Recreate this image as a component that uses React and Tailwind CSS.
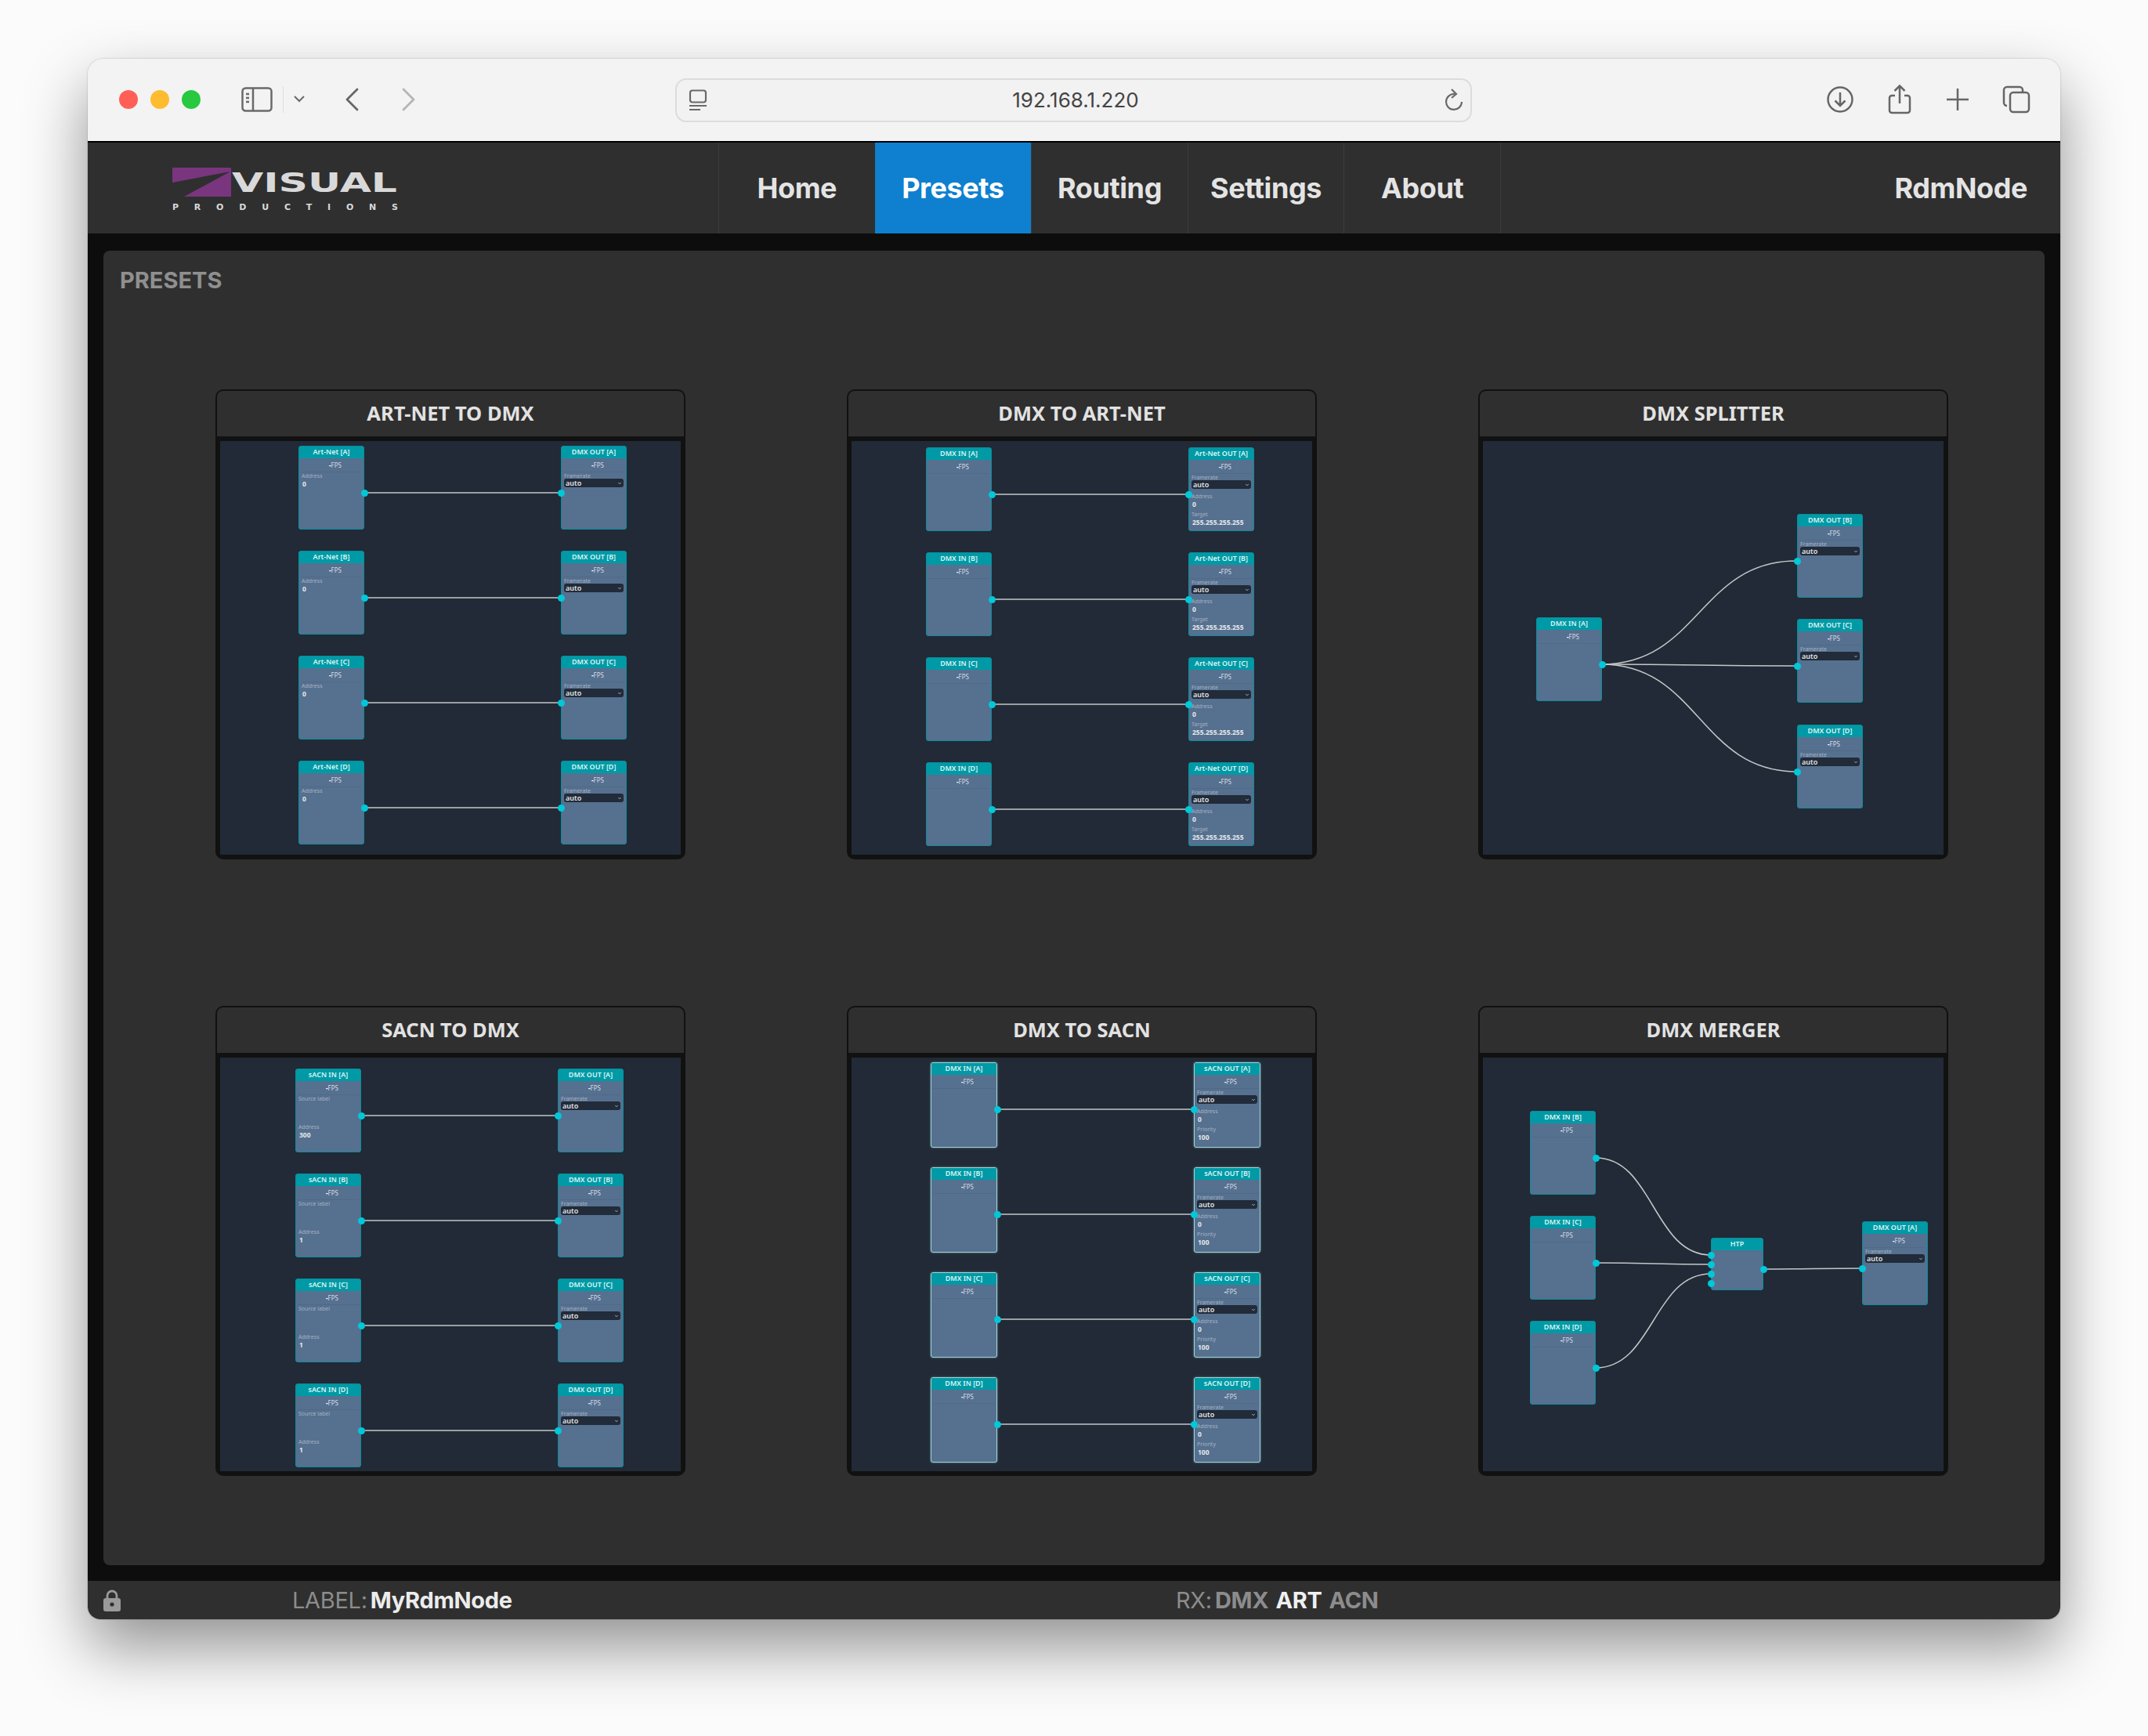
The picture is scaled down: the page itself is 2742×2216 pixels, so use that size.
import React from 'react';
import { ChevronDown } from 'lucide-react';

const UI = '[font-family:Inter,sans-serif]';

const OUT_FIELDS = [{ label: 'Framerate', select: true }];
const ARTNET_OUT = [
  { label: 'Framerate', select: true },
  { label: 'Address', value: '0' },
  { label: 'Target', value: '255.255.255.255' },
];
const SACN_OUT = [
  { label: 'Framerate', select: true },
  { label: 'Address', value: '0' },
  { label: 'Priority', value: '100' },
];
const sacnIn = (addr) => [{ label: 'Source label', tall: true }, { label: 'Address', value: addr }];

const LETTERS = ['A', 'B', 'C', 'D'];

// four parallel in -> out rows, every preset with this shape only differs in names and offsets
function rowsPreset(leftX, rightX, topY, leftTitle, rightTitle, leftFields, rightFields, glow) {
  const nodes = [];
  const links = [];
  const w = glow ? 85 : 84;
  const h = glow ? 109 : 107;
  LETTERS.forEach((l, i) => {
    const y = topY + i * 134;
    nodes.push({ x: leftX, y, w, h, title: `${leftTitle} [${l}]`, fields: leftFields(i), out: [60], glow });
    nodes.push({ x: rightX, y, w, h, title: `${rightTitle} [${l}]`, fields: rightFields, in: [60], glow });
    links.push([leftX + w, y + 60, rightX, y + 60]);
  });
  return { nodes, links };
}

const PRESETS = [
  { name: 'ART-NET TO DMX', ...rowsPreset(100, 435, 6, 'Art-Net', 'DMX OUT', () => [{ label: 'Address', value: '0' }], OUT_FIELDS) },
  { name: 'DMX TO ART-NET', ...rowsPreset(95, 430, 8, 'DMX IN', 'Art-Net OUT', () => [], ARTNET_OUT) },
  {
    name: 'DMX SPLITTER',
    nodes: [
      { x: 68, y: 225, title: 'DMX IN [A]', fields: [], out: [60] },
      { x: 401, y: 93, title: 'DMX OUT [B]', fields: OUT_FIELDS, in: [60] },
      { x: 401, y: 227, title: 'DMX OUT [C]', fields: OUT_FIELDS, in: [60] },
      { x: 401, y: 362, title: 'DMX OUT [D]', fields: OUT_FIELDS, in: [60] },
    ],
    links: [
      [151, 285, 401, 153],
      [151, 285, 401, 287],
      [151, 285, 401, 422],
    ],
  },
  { name: 'SACN TO DMX', ...rowsPreset(96, 431, 14, 'sACN IN', 'DMX OUT', (i) => sacnIn(i === 0 ? '300' : '1'), OUT_FIELDS) },
  { name: 'DMX TO SACN', ...rowsPreset(101, 437, 6, 'DMX IN', 'sACN OUT', () => [], SACN_OUT, true) },
  {
    name: 'DMX MERGER',
    nodes: [
      { x: 60, y: 68, title: 'DMX IN [B]', fields: [], out: [60] },
      { x: 60, y: 202, title: 'DMX IN [C]', fields: [], out: [60] },
      { x: 60, y: 336, title: 'DMX IN [D]', fields: [], out: [60] },
      { x: 291, y: 230, title: 'HTP', fields: [], noFps: true, w: 67, h: 67, in: [22, 34, 46, 58], out: [40] },
      { x: 484, y: 209, title: 'DMX OUT [A]', fields: OUT_FIELDS, in: [60] },
    ],
    links: [
      [144, 128, 291, 252],
      [144, 262, 291, 264],
      [144, 396, 291, 276],
      [358, 270, 484, 269],
    ],
  },
];

function Port({ y, side }) {
  return (
    <span
      className={`absolute w-[9px] h-[9px] rounded-full bg-[#00c8d8] ${side === 'left' ? 'left-[-5.5px]' : 'right-[-5.5px]'}`}
      style={{ top: y - 5.5 }}
    />
  );
}

function Field({ label, value, select, tall }) {
  return (
    <div className={`px-[3px] shrink-0 ${tall ? 'h-[36px]' : 'h-[23.5px]'}`}>
      <div className="text-[7px] leading-[9px] text-[#a3b2c4]">{label}</div>
      {select ? (
        <div className="h-[11px] mt-[-1px] rounded-[3px] bg-[#212b39] flex items-center justify-between pl-[2px] pr-[2px]">
          <span className="text-[9px] leading-[11px] font-semibold text-[#e8e8e8]">auto</span>
          <ChevronDown className="w-[6px] h-[6px] text-[#cfd4da]" strokeWidth={3} />
        </div>
      ) : (
        value && <div className="pl-[1px] text-[8.5px] leading-[11px] font-bold text-[#e4e8ec]">{value}</div>
      )}
    </div>
  );
}

function GraphNode({ x, y, title, fields, noFps, w = 84, h = 107, glow, in: ins = [], out: outs = [] }) {
  return (
    <div
      className={`absolute rounded-[3px] border bg-[#56708f] flex flex-col ${glow ? 'border-[#9fd6da] shadow-[0_0_3px_rgba(170,225,230,0.5)]' : 'border-[#0b8d9c]'}`}
      style={{ left: x, top: y, width: w, height: h }}
    >
      <div className="h-[15px] shrink-0 rounded-t-[2px] bg-[#009aa6] text-center text-[9px] leading-[14px] font-semibold text-[#dff5f5]">
        {title}
      </div>
      {!noFps && (
        <div className="h-[18px] shrink-0 mx-[2px] border-b border-[#4f6987] pl-[36px] text-[8px] leading-[18px] text-[#d3dce6]">
          <span className="font-extrabold text-white">-</span>FPS
        </div>
      )}
      {fields.map((f) => (
        <Field key={f.label} {...f} />
      ))}
      {ins.map((p) => (
        <Port key={`i${p}`} y={p} side="left" />
      ))}
      {outs.map((p) => (
        <Port key={`o${p}`} y={p} side="right" />
      ))}
    </div>
  );
}

function PresetCard({ preset }) {
  return (
    <div className="w-[600px] h-[600px] rounded-[10px] bg-[#111111] flex flex-col">
      <div className="h-[58px] mx-[2px] mt-[2px] rounded-t-[8px] bg-[#2f2f2f] text-center text-[25.5px] leading-[56px] font-bold text-[#e2e2e2] [font-family:'Noto_Sans',sans-serif]">
        {preset.name}
      </div>
      <div className="relative flex-1 mx-[6px] mt-[6px] mb-[6px] bg-[#212a36] [font-family:'Noto_Sans',sans-serif]">
        <svg className="absolute inset-0 w-full h-full" fill="none" stroke="#c4c7c9" strokeWidth="1.5">
          {preset.links.map(([x1, y1, x2, y2], i) => {
            const mx = (x1 + x2) / 2;
            return <path key={i} d={`M${x1} ${y1} C${mx} ${y1} ${mx} ${y2} ${x2} ${y2}`} />;
          })}
        </svg>
        {preset.nodes.map((n) => (
          <GraphNode key={n.title} {...n} />
        ))}
      </div>
    </div>
  );
}

function Logo() {
  return (
    <svg width="292" height="58" viewBox="0 0 292 58" className="ml-[108px]">
      <polygon points="0,0 75,0 75,37 0,37" fill="#7a357f" />
      <polygon points="0,19 74,5 15,37 0,37" fill="#2f2f2f" />
      <text x="76" y="31" textLength="211" lengthAdjust="spacingAndGlyphs" fill="#d9d9d9" fontFamily="'DejaVu Sans', sans-serif" fontWeight="700" fontSize="34">
        VISUAL
      </text>
      <text x="0" y="54" textLength="288" lengthAdjust="spacing" fill="#d9d9d9" fontFamily="'DejaVu Sans', sans-serif" fontWeight="700" fontSize="11">
        PRODUCTIONS
      </text>
    </svg>
  );
}

function Toolbar() {
  return (
    <div className="h-[107px] shrink-0 bg-[#f3f3f3] border-b-2 border-black flex items-center relative pb-[2px]">
      <div className="flex items-center gap-[16px] ml-[40px]">
        <span className="w-[24px] h-[24px] rounded-full bg-[#ff5f57]" />
        <span className="w-[24px] h-[24px] rounded-full bg-[#febc2e]" />
        <span className="w-[24px] h-[24px] rounded-full bg-[#28c840]" />
      </div>
      <svg width="40" height="32" viewBox="0 0 40 32" fill="none" stroke="#6a6a6a" strokeWidth="2.5" className="ml-[52px]">
        <rect x="1.5" y="1.5" width="37" height="29" rx="4" />
        <path d="M15 2v28M6 9h4M6 14h4M6 19h4" />
      </svg>
      <span className="w-px h-[34px] bg-[#dedede] ml-[13px]" />
      <svg width="14" height="9" viewBox="0 0 14 9" fill="none" stroke="#6a6a6a" strokeWidth="2" className="ml-[13px]">
        <path d="M1 1l6 6 6-6" />
      </svg>
      <svg width="18" height="30" viewBox="0 0 18 30" fill="none" stroke="#666" strokeWidth="2.8" strokeLinecap="round" strokeLinejoin="round" className="ml-[51px]">
        <path d="M16 2L3 15l13 13" />
      </svg>
      <svg width="18" height="30" viewBox="0 0 18 30" fill="none" stroke="#b4b4b4" strokeWidth="2.8" strokeLinecap="round" strokeLinejoin="round" className="ml-[55px]">
        <path d="M2 2l13 13L2 28" />
      </svg>
      {/* address bar */}
      <div className="w-[1017px] h-[56px] ml-[331px] mt-[2px] rounded-[14px] border-2 border-[#dcdcdc] bg-[#f2f2f2] flex items-center justify-between pl-[15px] pr-[10px]">
        <svg width="24" height="28" viewBox="0 0 24 28" fill="none" stroke="#6a6a6a" strokeWidth="2.2">
          <rect x="2" y="1.5" width="20" height="15" rx="3" />
          <path d="M1 21h22M1 26h14" />
        </svg>
        <span className={`${UI} text-[26px] text-[#444444]`}>192.168.1.220</span>
        <svg width="24" height="30" viewBox="0 0 24 30" fill="none" stroke="#6a6a6a" strokeWidth="2.2">
          <path d="M14 7a10 10 0 1 0 9 10" />
          <path d="M10 1l6 6-6 5" />
        </svg>
      </div>
      <svg width="34" height="36" viewBox="0 0 34 36" fill="none" stroke="#666" strokeWidth="2.5" className="ml-[453px]">
        <circle cx="17" cy="18" r="15.5" />
        <path d="M17 9v17M10.5 19.5L17 26l6.5-6.5" />
      </svg>
      <svg width="30" height="38" viewBox="0 0 30 38" fill="none" stroke="#666" strokeWidth="2.5" className="ml-[44px]">
        <path d="M9 14H5a3 3 0 0 0-3 3v16a3 3 0 0 0 3 3h20a3 3 0 0 0 3-3V17a3 3 0 0 0-3-3h-4" />
        <path d="M15 24V2M8.5 8L15 1.5 21.5 8" />
      </svg>
      <svg width="28" height="28" viewBox="0 0 28 28" fill="none" stroke="#666" strokeWidth="2.5" className="ml-[45px]">
        <path d="M14 0v28M0 14h28" />
      </svg>
      <svg width="36" height="36" viewBox="0 0 36 36" fill="none" stroke="#666" strokeWidth="2.5" className="ml-[43px]">
        <path d="M6 26a4 4 0 0 1-4-4V6a4 4 0 0 1 4-4h16a4 4 0 0 1 4 4v2" />
        <rect x="10" y="9" width="24" height="25" rx="4" />
      </svg>
    </div>
  );
}

const NAV = ['Home', 'Presets', 'Routing', 'Settings', 'About'];

function AppHeader() {
  return (
    <div className="h-[116px] shrink-0 bg-[#2f2f2f] flex items-stretch">
      <div className="w-[805px] flex items-center pt-[6px]">
        <Logo />
      </div>
      <nav className="flex items-stretch border-r border-[#3c3c3c]">
        {NAV.map((item) => (
          <div
            key={item}
            className={`w-[199.6px] flex items-center justify-center text-[36px] font-bold tracking-[-0.4px] ${UI} ${
              item === 'Presets' ? 'bg-[#0f80cf] text-white' : 'border-l border-[#3c3c3c] text-[#e4e4e4]'
            }`}
          >
            {item}
          </div>
        ))}
      </nav>
      <div className={`ml-auto pr-[42px] flex items-center text-[36px] font-bold tracking-[-0.4px] text-[#e4e4e4] ${UI}`}>RdmNode</div>
    </div>
  );
}

function StatusBar() {
  return (
    <div className={`h-[49px] shrink-0 bg-[#2f2f2f] flex items-center pl-[20px] text-[29px] tracking-[-0.3px] ${UI}`}>
      <svg width="22" height="28" viewBox="0 0 22 28">
        <path d="M5 12V8a6 6 0 0 1 12 0v4" fill="none" stroke="#9a9a9a" strokeWidth="2.8" />
        <rect x="0" y="11" width="22" height="17" rx="3" fill="#9a9a9a" />
        <circle cx="11" cy="19" r="2.6" fill="#2f2f2f" />
      </svg>
      <div className="w-[1128px] ml-[219px] flex gap-[4px] text-[#8c8c8c]">
        <span>LABEL:</span>
        <span className="font-bold text-[#ececec]">MyRdmNode</span>
      </div>
      <div className="flex gap-[9px] text-[#8c8c8c]">
        <span className="mr-[-5px]">RX:</span>
        <span className="font-bold">DMX</span>
        <span className="font-bold text-[#f0f0f0]">ART</span>
        <span className="font-bold">ACN</span>
      </div>
    </div>
  );
}

export default function App() {
  return (
    <div className="w-[2742px] h-[2216px] overflow-hidden bg-[#fbfbfb] pt-[75px] pl-[112px]">
      <div className="w-[2518px] h-[1992px] rounded-t-[20px] rounded-b-[16px] overflow-hidden flex flex-col shadow-[0_36px_80px_rgba(0,0,0,0.42),0_0_2px_rgba(0,0,0,0.3)]">
        <Toolbar />
        <AppHeader />
        <div className="flex-1 min-h-0 bg-[#0d0d0d] p-[20px] pt-[22px]">
          <div className="h-full rounded-[8px] bg-[#2f2f2f] pt-[22px] pl-[21px]">
            <h1 className={`text-[29px] leading-[32px] font-bold text-[#8f8f8f] ${UI}`}>PRESETS</h1>
            <div className="ml-[122px] mt-[123px] grid grid-cols-[600px_600px_600px] gap-x-[206px] gap-y-[187px]">
              {PRESETS.map((p) => (
                <PresetCard key={p.name} preset={p} />
              ))}
            </div>
          </div>
        </div>
        <StatusBar />
      </div>
    </div>
  );
}
